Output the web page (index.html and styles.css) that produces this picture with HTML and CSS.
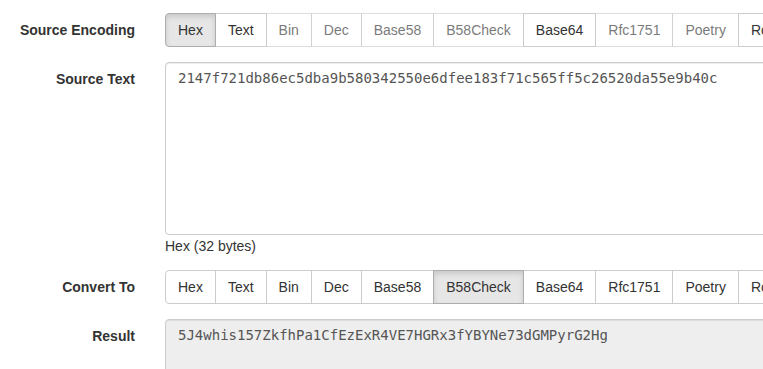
FILE: index.html
```html
<!DOCTYPE html>
<html lang="en">
<head>
    <meta charset="UTF-8">
    <meta name="viewport" content="width=device-width, initial-scale=1.0">
    <title>Encoding Converter</title>
    <link rel="stylesheet" href="styles.css">
</head>
<body>
    <form class="form">
        <!-- 源编码 -->
        <div class="form-group">
            <label class="control-label">Source Encoding</label>
            <div class="controls">
                <div class="btn-group">
                    <button type="button" class="btn active">Hex</button>
                    <button type="button" class="btn">Text</button>
                    <button type="button" class="btn" disabled>Bin</button>
                    <button type="button" class="btn" disabled>Dec</button>
                    <button type="button" class="btn" disabled>Base58</button>
                    <button type="button" class="btn" disabled>B58Check</button>
                    <button type="button" class="btn">Base64</button>
                    <button type="button" class="btn" disabled>Rfc1751</button>
                    <button type="button" class="btn" disabled>Poetry</button>
                    <button type="button" class="btn">Rot13</button>
                </div>
            </div>
        </div>
        <!-- 源文本 -->
        <div class="form-group">
            <label class="control-label">Source Text</label>
            <div class="controls">
                <textarea class="form-control source">2147f721db86ec5dba9b580342550e6dfee183f71c565ff5c26520da55e9b40c</textarea>
                <span class="help-block">Hex (32 bytes)</span>
            </div>
        </div>
        <!-- 目标编码 -->
        <div class="form-group">
            <label class="control-label">Convert To</label>
            <div class="controls">
                <div class="btn-group">
                    <button type="button" class="btn">Hex</button>
                    <button type="button" class="btn">Text</button>
                    <button type="button" class="btn">Bin</button>
                    <button type="button" class="btn">Dec</button>
                    <button type="button" class="btn">Base58</button>
                    <button type="button" class="btn active">B58Check</button>
                    <button type="button" class="btn">Base64</button>
                    <button type="button" class="btn">Rfc1751</button>
                    <button type="button" class="btn">Poetry</button>
                    <button type="button" class="btn">Rot13</button>
                </div>
            </div>
        </div>
        <!-- 结果 -->
        <div class="form-group">
            <label class="control-label">Result</label>
            <div class="controls">
                <textarea class="form-control result" readonly>5J4whis157ZkfhPa1CfEzExR4VE7HGRx3fYBYNe73dGMPyrG2Hg</textarea>
            </div>
        </div>
    </form>
</body>
</html>
```

FILE: styles.css
```css
html {
    overflow: hidden;
}
body {
    margin: 0;
    font-family: "Liberation Sans", Arial, sans-serif;
    font-size: 14px;
    line-height: 1.42857;
    color: #333;
    background: #fff;
}
.form {
    padding-top: 13px;
    width: 1000px;
}
.form-group {
    display: flex;
    margin-bottom: 15px;
}
.control-label {
    flex: 0 0 150px;
    box-sizing: border-box;
    padding: 8px 15px 0 0;
    text-align: right;
    font-weight: bold;
}
.controls {
    flex: 1;
    padding-left: 15px;
    min-width: 0;
}
.btn-group {
    display: flex;
}
.btn {
    font-family: inherit;
    font-size: 14px;
    line-height: 20px;
    height: 34px;
    color: #333;
    background-color: #fff;
    border: 1px solid #ccc;
    padding: 6px 12px;
    margin: 0;
    cursor: pointer;
    white-space: nowrap;
}
.btn + .btn {
    margin-left: -1px;
}
.btn:first-child {
    border-radius: 4px 0 0 4px;
}
.btn.active {
    background-color: #e6e6e6;
    border-color: #adadad;
    box-shadow: inset 0 3px 5px rgba(0, 0, 0, .125);
    position: relative;
}
.btn:disabled {
    opacity: .65;
    cursor: not-allowed;
}
.form-control {
    display: block;
    box-sizing: border-box;
    width: 100%;
    padding: 6px 12px;
    font-family: "DejaVu Sans Mono", monospace;
    font-size: 14px;
    line-height: 1.42857;
    color: #555;
    background-color: #fff;
    border: 1px solid #ccc;
    border-radius: 4px;
    box-shadow: inset 0 1px 1px rgba(0, 0, 0, .075);
    resize: vertical;
    outline: none;
}
.source {
    height: 173px;
}
.result {
    height: 174px;
    background-color: #eee;
}
.help-block {
    display: block;
    margin: 2px 0 -2px;
    color: #333;
}
```
